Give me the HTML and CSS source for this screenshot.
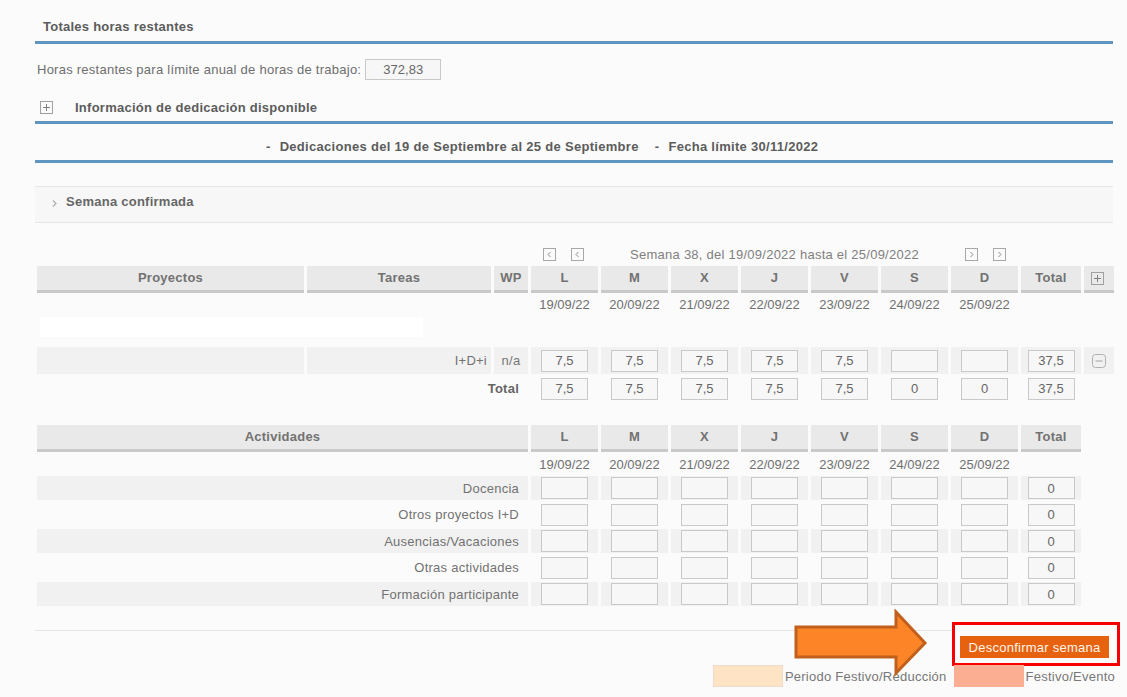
FILE: index.html
```html
<!DOCTYPE html>
<html lang="es">
<head>
<meta charset="utf-8">
<title>Dedicaciones semanales</title>
<link rel="stylesheet" href="styles.css">
</head>
<body>
<main class="page">

  <section class="totals">
    <h2 class="block-title">Totales horas restantes</h2>
    <div class="remaining">
      <span>Horas restantes para límite anual de horas de trabajo:</span>
      <span class="field field-wide">372,83</span>
    </div>
    <div class="info-row">
      <svg class="box-icon" width="13" height="13" viewBox="0 0 13 13"><rect x="0.5" y="0.5" width="12" height="12" fill="none" stroke="#a0a0a0"/><path d="M3 6.5h7M6.5 3v7" stroke="#808080"/></svg>
      <span class="info-title">Información de dedicación disponible</span>
    </div>
  </section>

  <div class="period"><span class="dash">-</span><span>Dedicaciones del 19 de Septiembre al 25 de Septiembre</span><span class="dash dash-second">-</span><span>Fecha límite 30/11/2022</span></div>

  <div class="confirmed">
    <svg class="chev" width="6" height="9" viewBox="0 0 6 9"><path d="M1 1.5l3 3-3 3" fill="none" stroke="#aaa" stroke-width="1.1"/></svg>
    <span>Semana confirmada</span>
  </div>

  <!-- Proyectos -->
  <div class="sheet">
    <div class="row nav-row">
      <div class="week-nav">
        <svg width="13" height="13" viewBox="0 0 13 13"><rect x="0.5" y="0.5" width="12" height="12" fill="none" stroke="#a8a8a8"/><path d="M7.5 4l-2.5 2.5 2.5 2.5" fill="none" stroke="#8a8a8a"/></svg>
        <svg width="13" height="13" viewBox="0 0 13 13"><rect x="0.5" y="0.5" width="12" height="12" fill="none" stroke="#a8a8a8"/><path d="M7.5 4l-2.5 2.5 2.5 2.5" fill="none" stroke="#8a8a8a"/></svg>
        <span class="week-label">Semana 38, del 19/09/2022 hasta el 25/09/2022</span>
        <svg width="13" height="13" viewBox="0 0 13 13"><rect x="0.5" y="0.5" width="12" height="12" fill="none" stroke="#a8a8a8"/><path d="M5.5 4l2.5 2.5-2.5 2.5" fill="none" stroke="#8a8a8a"/></svg>
        <svg width="13" height="13" viewBox="0 0 13 13"><rect x="0.5" y="0.5" width="12" height="12" fill="none" stroke="#a8a8a8"/><path d="M5.5 4l2.5 2.5-2.5 2.5" fill="none" stroke="#8a8a8a"/></svg>
      </div>
    </div>

    <div class="row head-row">
      <div class="th">Proyectos</div>
      <div class="th">Tareas</div>
      <div class="th">WP</div>
      <div class="th">L</div>
      <div class="th">M</div>
      <div class="th">X</div>
      <div class="th">J</div>
      <div class="th">V</div>
      <div class="th">S</div>
      <div class="th">D</div>
      <div class="th">Total</div>
      <div class="th th-icon"><svg width="13" height="13" viewBox="0 0 13 13"><rect x="0.5" y="0.5" width="12" height="12" fill="none" stroke="#a0a0a0"/><path d="M3 6.5h7M6.5 3v7" stroke="#808080"/></svg></div>
    </div>

    <div class="row date-row">
      <span class="c-l">19/09/22</span><span>20/09/22</span><span>21/09/22</span><span>22/09/22</span><span>23/09/22</span><span>24/09/22</span><span>25/09/22</span>
    </div>

    <div class="row blank-row"><div class="blank"></div></div>

    <div class="row data-row shaded">
      <div class="td"></div>
      <div class="td td-right">I+D+i</div>
      <div class="td td-center">n/a</div>
      <div class="td"><span class="field">7,5</span></div>
      <div class="td"><span class="field">7,5</span></div>
      <div class="td"><span class="field">7,5</span></div>
      <div class="td"><span class="field">7,5</span></div>
      <div class="td"><span class="field">7,5</span></div>
      <div class="td"><span class="field"></span></div>
      <div class="td"><span class="field"></span></div>
      <div class="td"><span class="field">37,5</span></div>
      <div class="td"><svg width="14" height="14" viewBox="0 0 14 14"><rect x="0.5" y="0.5" width="13" height="13" rx="3" fill="none" stroke="#b0b0b0"/><path d="M3.5 7h7" stroke="#a0a0a0"/></svg></div>
    </div>

    <div class="row data-row total-row">
      <div class="td label-cell strong">Total</div>
      <div class="td"><span class="field">7,5</span></div>
      <div class="td"><span class="field">7,5</span></div>
      <div class="td"><span class="field">7,5</span></div>
      <div class="td"><span class="field">7,5</span></div>
      <div class="td"><span class="field">7,5</span></div>
      <div class="td"><span class="field">0</span></div>
      <div class="td"><span class="field">0</span></div>
      <div class="td"><span class="field">37,5</span></div>
    </div>
  </div>

  <!-- Actividades -->
  <div class="sheet activities">
    <div class="row head-row">
      <div class="th label-cell-head">Actividades</div>
      <div class="th">L</div>
      <div class="th">M</div>
      <div class="th">X</div>
      <div class="th">J</div>
      <div class="th">V</div>
      <div class="th">S</div>
      <div class="th">D</div>
      <div class="th">Total</div>
    </div>

    <div class="row date-row act-dates">
      <span class="c-l">19/09/22</span><span>20/09/22</span><span>21/09/22</span><span>22/09/22</span><span>23/09/22</span><span>24/09/22</span><span>25/09/22</span>
    </div>

    <div class="act-rows">
      <div class="row data-row act-row shaded">
        <div class="td label-cell">Docencia</div>
        <div class="td"><span class="field"></span></div><div class="td"><span class="field"></span></div><div class="td"><span class="field"></span></div><div class="td"><span class="field"></span></div><div class="td"><span class="field"></span></div><div class="td"><span class="field"></span></div><div class="td"><span class="field"></span></div>
        <div class="td"><span class="field">0</span></div>
      </div>
      <div class="row data-row act-row">
        <div class="td label-cell">Otros proyectos I+D</div>
        <div class="td"><span class="field"></span></div><div class="td"><span class="field"></span></div><div class="td"><span class="field"></span></div><div class="td"><span class="field"></span></div><div class="td"><span class="field"></span></div><div class="td"><span class="field"></span></div><div class="td"><span class="field"></span></div>
        <div class="td"><span class="field">0</span></div>
      </div>
      <div class="row data-row act-row shaded">
        <div class="td label-cell">Ausencias/Vacaciones</div>
        <div class="td"><span class="field"></span></div><div class="td"><span class="field"></span></div><div class="td"><span class="field"></span></div><div class="td"><span class="field"></span></div><div class="td"><span class="field"></span></div><div class="td"><span class="field"></span></div><div class="td"><span class="field"></span></div>
        <div class="td"><span class="field">0</span></div>
      </div>
      <div class="row data-row act-row">
        <div class="td label-cell">Otras actividades</div>
        <div class="td"><span class="field"></span></div><div class="td"><span class="field"></span></div><div class="td"><span class="field"></span></div><div class="td"><span class="field"></span></div><div class="td"><span class="field"></span></div><div class="td"><span class="field"></span></div><div class="td"><span class="field"></span></div>
        <div class="td"><span class="field">0</span></div>
      </div>
      <div class="row data-row act-row shaded">
        <div class="td label-cell">Formación participante</div>
        <div class="td"><span class="field"></span></div><div class="td"><span class="field"></span></div><div class="td"><span class="field"></span></div><div class="td"><span class="field"></span></div><div class="td"><span class="field"></span></div><div class="td"><span class="field"></span></div><div class="td"><span class="field"></span></div>
        <div class="td"><span class="field">0</span></div>
      </div>
    </div>
  </div>

  <footer class="actions">
    <div class="highlight"></div>
    <svg class="pointer" width="136" height="68" viewBox="0 0 136 68">
      <polygon points="2,18 102,18 102,3 131,34 102,64 102,48 2,48" fill="#fd8427" stroke="#c1601d" stroke-width="3" stroke-linejoin="miter"/>
    </svg>
    <div class="button-row">
      <button class="btn-unconfirm" type="button">Desconfirmar semana</button>
    </div>
    <div class="legend">
      <span class="swatch swatch-period"></span><span class="legend-text">Periodo Festivo/Reducción</span>
      <span class="swatch swatch-holiday"></span><span class="legend-text">Festivo/Evento</span>
    </div>
  </footer>

</main>
</body>
</html>
```

FILE: styles.css
```css
* {
  box-sizing: border-box;
}

html,
body {
  margin: 0;
  background: #fbfbfb;
}

body {
  font-family: "Liberation Sans", Arial, sans-serif;
  font-size: 13px;
  letter-spacing: 0.25px;
  color: #727272;
  overflow: hidden;
}

.page {
  width: 1113px;
  padding-left: 35px;
}

/* ---- totals block ---- */
.block-title {
  margin: 0;
  padding: 18px 0 5px 8px;
  line-height: 18px;
  font-size: 13px;
  font-weight: bold;
  color: #5c5c5c;
  border-bottom: 3px solid #5f95bf;
}

.remaining {
  display: flex;
  align-items: center;
  gap: 4px;
  margin-top: 15px;
  padding-left: 2px;
  height: 21px;
  color: #6e6e6e;
}

.field {
  display: inline-flex;
  align-items: center;
  justify-content: center;
  width: 47px;
  height: 22px;
  border: 1px solid #c9c9c9;
  background: #f7f7f7;
  color: #666;
  letter-spacing: 0;
}

.field-wide {
  width: 76px;
  height: 21px;
}

.info-row {
  display: flex;
  align-items: center;
  height: 22px;
  margin-top: 16px;
  padding: 0 0 3px 5px;
  box-sizing: content-box;
  border-bottom: 3px solid #5f95bf;
}

.box-icon {
  flex: none;
}

.info-title {
  margin-left: 22px;
  font-weight: bold;
  color: #5c5c5c;
}

/* ---- period line ---- */
.period {
  padding: 14px 0 4px 231px;
  line-height: 18px;
  font-weight: bold;
  letter-spacing: 0.3px;
  color: #5c5c5c;
  border-bottom: 3px solid #5f95bf;
  white-space: nowrap;
}

.dash {
  margin-right: 9px;
}

.dash-second {
  margin-left: 16px;
}

/* ---- confirmed panel ---- */
.confirmed {
  display: flex;
  align-items: center;
  margin-top: 23px;
  padding: 6px 0 11px 17px;
  line-height: 18px;
  background: #f7f7f7;
  border-top: 1px solid #e6e6e6;
  border-bottom: 1px solid #e6e6e6;
  font-weight: bold;
  color: #666;
}

.chev {
  margin: 3px 8px 0 0;
}

/* ---- week sheet grid ---- */
.sheet {
  margin-left: 2px;
}

.row {
  display: grid;
  grid-template-columns: 267px 184px 34px repeat(7, 67px) 60px 30px;
  column-gap: 3px;
}

.nav-row {
  margin-top: 21px;
  height: 20px;
}

.week-nav {
  grid-column: 4 / 11;
  display: flex;
  align-items: center;
  justify-content: center;
}

.week-nav svg + svg {
  margin-left: 15px;
}

.week-label {
  margin: 0 46px;
  color: #808080;
}

.head-row {
  margin-top: 2px;
}

.th {
  height: 27px;
  line-height: 24px;
  text-align: center;
  background: #e9e9e9;
  border-bottom: 3px solid #c9c9c9;
  font-weight: bold;
  color: #727272;
}

.th-icon {
  display: flex;
  align-items: center;
  justify-content: center;
  padding: 0 4px 3px 0;
}

.th-icon svg {
  margin-top: 3px;
}

.label-cell-head {
  grid-column: 1 / 4;
}

.date-row {
  height: 22px;
  align-items: center;
  color: #707070;
  letter-spacing: 0;
}

.date-row span {
  text-align: center;
}

.date-row .c-l {
  grid-column: 4;
}

.blank-row {
  margin-top: 2px;
  height: 20px;
}

.blank {
  grid-column: 1 / 3;
  width: 383px;
  margin-left: 3px;
  background: #fff;
}

.data-row {
  height: 27px;
  margin-top: 10px;
}

.td {
  display: flex;
  align-items: center;
  justify-content: center;
}

.shaded .td {
  background: #f1f1f1;
}

.td-right {
  justify-content: flex-end;
  padding-right: 4px;
}

.td-center {
  color: #777;
}

.total-row {
  height: 25px;
  margin-top: 2px;
}

.label-cell {
  grid-column: 1 / 4;
  justify-content: flex-end;
  padding-right: 9px;
  color: #727272;
}

.strong {
  font-weight: bold;
  color: #666;
}

.total-row .field,
.shaded .field {
  height: 22px;
}

.field:empty {
  color: transparent;
}

/* ---- activities ---- */
.activities {
  margin-top: 24px;
}

.activities .head-row {
  margin-top: 0;
}

.act-dates {
  height: 24px;
}

.act-rows {
  display: flex;
  flex-direction: column;
  gap: 2.6px;
}

.act-row {
  height: 24px;
  margin-top: 0;
}

.act-row .field {
  height: 22px;
}

/* ---- footer ---- */
.actions {
  position: relative;
  margin-top: 24px;
  border-top: 1px solid #e4e4e4;
}

.highlight {
  position: absolute;
  left: 917px;
  top: -9px;
  width: 168px;
  height: 44px;
  border: 3px solid #f90000;
  background: #fbfbfb;
}

.pointer {
  position: absolute;
  left: 759px;
  top: -22px;
  z-index: 2;
}

.button-row {
  position: relative;
  display: flex;
  justify-content: flex-end;
  padding: 5px 4px 0 0;
}

.btn-unconfirm {
  width: 149px;
  height: 22px;
  padding: 0;
  border: 0;
  border-radius: 0;
  background: #e6620e;
  color: #fff5ec;
  font: 13px "Liberation Sans", Arial, sans-serif;
  letter-spacing: 0.25px;
}

.legend {
  position: relative;
  display: flex;
  justify-content: flex-end;
  align-items: center;
  margin: 7px -2px 0 0;
  height: 22px;
}

.swatch {
  width: 70px;
  height: 22px;
}

.swatch-period {
  background: #fee3c5;
  border: 1px solid #ecdcc8;
}

.swatch-holiday {
  margin-left: 7px;
  background: #fcae93;
}

.legend-text {
  margin-left: 2px;
  color: #777;
}
```
